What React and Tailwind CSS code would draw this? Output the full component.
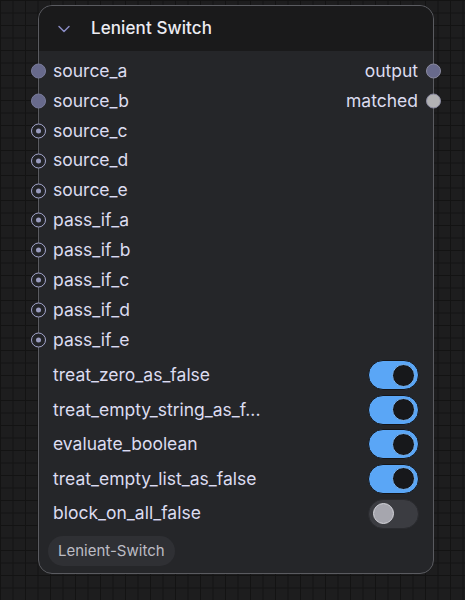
import React from "react";
import { ChevronDown } from "lucide-react";

const inputs = [
  { name: "source_a", kind: "filled" },
  { name: "source_b", kind: "filled" },
  { name: "source_c", kind: "ring" },
  { name: "source_d", kind: "ring" },
  { name: "source_e", kind: "ring" },
  { name: "pass_if_a", kind: "ring" },
  { name: "pass_if_b", kind: "ring" },
  { name: "pass_if_c", kind: "ring" },
  { name: "pass_if_d", kind: "ring" },
  { name: "pass_if_e", kind: "ring" },
];

const outputs = {
  source_a: { name: "output", color: "bg-[#686a8c]" },
  source_b: { name: "matched", color: "bg-[#b2b2b4]" },
};

const widgets = [
  { label: "treat_zero_as_false", on: true },
  { label: "treat_empty_string_as_f...", on: true },
  { label: "evaluate_boolean", on: true },
  { label: "treat_empty_list_as_false", on: true },
  { label: "block_on_all_false", on: false },
];

const Slot = ({ kind }) =>
  kind === "filled" ? (
    <span className="absolute left-[-8px] top-1/2 -translate-y-1/2 w-[15px] h-[15px] rounded-full bg-[#686a8c] border border-[#7a7c9c]" />
  ) : (
    <span className="absolute left-[-8px] top-1/2 -translate-y-1/2 w-[15px] h-[15px] rounded-full bg-[#222327] border-[1.5px] border-[#a4a6cc] flex items-center justify-center">
      <span className="w-[5px] h-[5px] rounded-full bg-[#9a9cc0]" />
    </span>
  );

const Toggle = ({ on }) =>
  on ? (
    <div className="w-[51px] h-[30px] rounded-full bg-[#5aa6f6] border border-[#15161a] flex items-center justify-end pr-[3px]">
      <span className="w-[23px] h-[23px] rounded-full bg-[#17181b] border-[1.5px] border-[#7ab8fa]" />
    </div>
  ) : (
    <div className="w-[51px] h-[30px] rounded-full bg-[#3b3c41] border border-[#2a2b2f] flex items-center pl-[4px]">
      <span className="w-[21px] h-[21px] rounded-full bg-[#a6a6ae] border-[1.5px] border-[#d4d4da]" />
    </div>
  );

export default function App() {
  return (
    <div
      className="w-full h-[600px] overflow-hidden bg-[#1d1d1e] bg-[linear-gradient(to_right,#131313_1px,transparent_1px),linear-gradient(to_bottom,#131313_1px,transparent_1px)] bg-[size:12.5px_12.5px] pt-[5px] pl-[38px]"
      style={{ fontFamily: "Inter, 'Noto Sans', sans-serif" }}
    >
      <div className="relative w-[396px] h-[569px] rounded-[14px] border border-[#5a5b60] bg-[#252629]">
        <div className="h-[45px] rounded-t-[14px] bg-[#1a1a1b] flex items-center pl-[15px] gap-[17px]">
          <ChevronDown size={20} strokeWidth={1.75} className="text-[#8a8cc4]" />
          <span className="text-[17px] text-[#ececf2] font-medium tracking-[0.1px]">Lenient Switch</span>
        </div>

        <div className="pt-[5px]">
          {inputs.map((s) => (
            <div key={s.name} className="relative h-[29.9px] flex items-center justify-between pl-[14px] pr-[15px]">
              <Slot kind={s.kind} />
              <span className="text-[17.5px] text-[#dcdcf0]">{s.name}</span>
              {outputs[s.name] && (
                <>
                  <span className="text-[17.5px] text-[#dcdcf0]">{outputs[s.name].name}</span>
                  <span
                    className={`absolute right-[-8px] top-1/2 -translate-y-1/2 w-[15px] h-[15px] rounded-full border border-[#8a8aa0] ${outputs[s.name].color}`}
                  />
                </>
              )}
            </div>
          ))}
        </div>

        <div className="mt-[3px]">
          {widgets.map((w) => (
            <div key={w.label} className="h-[34.6px] flex items-center justify-between pl-[14px] pr-[14px]">
              <span className="text-[17.5px] text-[#dcdcf0]">{w.label}</span>
              <Toggle on={w.on} />
            </div>
          ))}
        </div>

        <div className="pl-[9px] mt-[5px]">
          <span className="inline-flex items-center h-[30px] px-[10px] rounded-full bg-[#2f3034] text-[15px] text-[#bcbcc4]">
            Lenient-Switch
          </span>
        </div>
      </div>
    </div>
  );
}
